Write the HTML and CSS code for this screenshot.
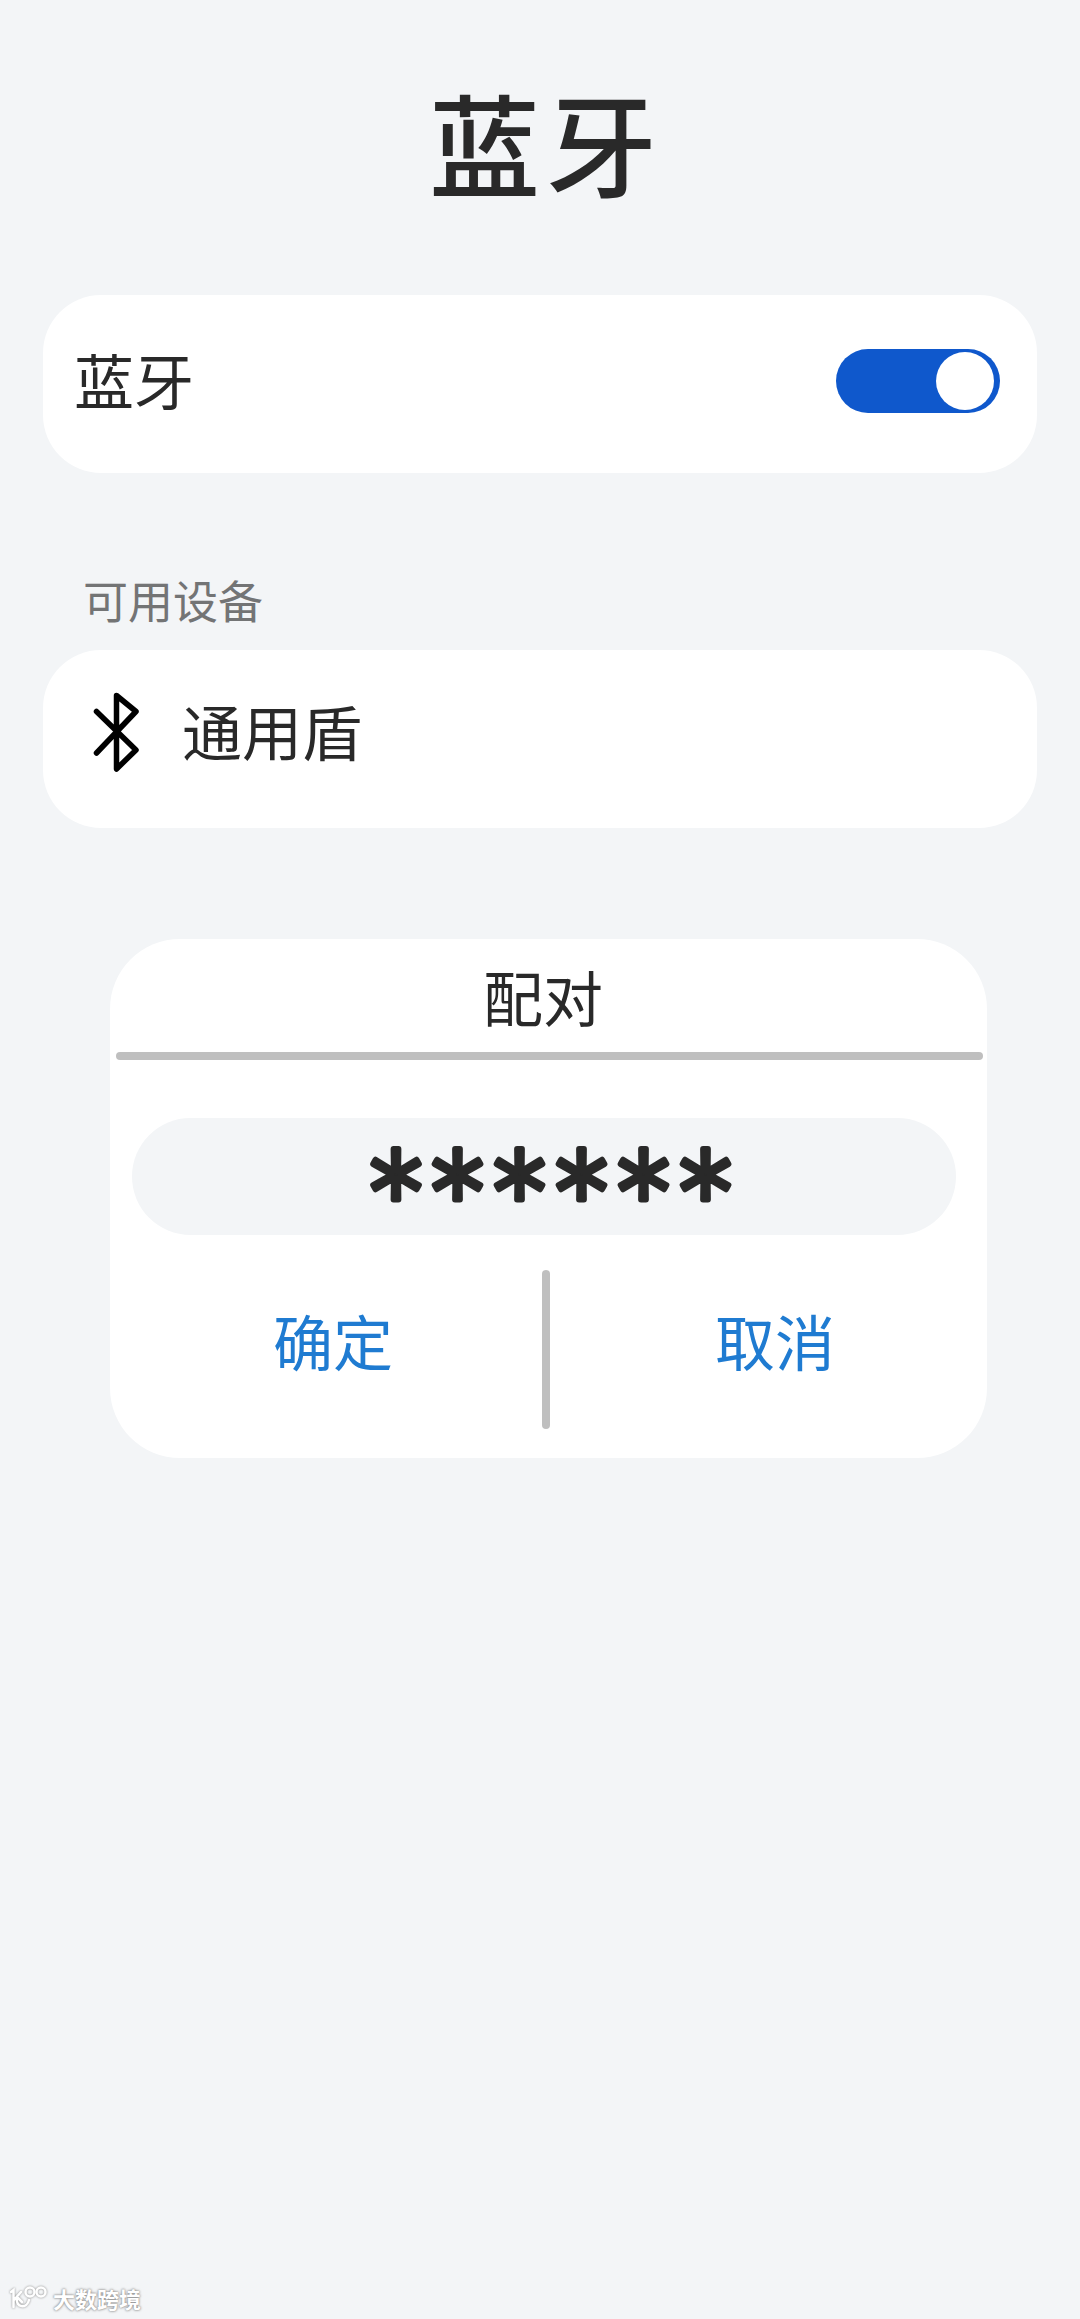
FILE: index.html
```
<!DOCTYPE html>
<html lang="zh-CN">
<head>
  <meta charset="UTF-8" />
  <meta name="viewport" content="width=device-width, initial-scale=1.0"/>
  <title>蓝牙</title>
  <link rel="stylesheet" href="styles.css">
</head>
<body>
  <h1 class="page-title">蓝牙</h1>

  <main>
    <div class="card">
      <span class="label">蓝牙</span>
      <div class="switch"><div class="knob"></div></div>
    </div>

    <h2 class="section-title">可用设备</h2>
    <div class="card device">
      <svg class="bt-icon" width="46" height="80" viewBox="0 0 46 80">
        <path d="M3.500 19.500 L43 58 L23.500 77 V3.500 L43 19.500 L3.500 61" />
      </svg>
      <span class="label">通用盾</span>
    </div>

    <!-- Pairing dialog -->
    <div class="dialog">
      <h3 class="dialog-title">配对</h3>
      <div class="line"></div>
      <div class="pin">
        <svg width="824" height="117" viewBox="0 0 824 117">
          <text x="264 325.500 387.500 449.500 511.500 573.500" y="120">******</text>
        </svg>
      </div>
      <div class="actions">
        <div class="btn ok">确定</div>
        <div class="divider"></div>
        <div class="btn cancel">取消</div>
      </div>
    </div>
  </main>

  <footer class="brand">
    <svg class="brand-logo" width="40" height="28" viewBox="0 0 40 28">
      <path d="M2 8 L4.500 6 V23 M5 16 L12 8 M8 14 C6 24 18 25 20 16 M9 14 L13 18" />
      <circle cx="21" cy="8" r="4.500" />
      <circle cx="32" cy="8" r="4.500" />
    </svg>
    <span>大数跨境</span>
  </footer>
</body>
</html>
```
FILE: styles.css
```
* {
  box-sizing: border-box;
}

body {
  font-family: "Noto Sans CJK SC", sans-serif;
  background-color: #f3f5f7;
  color: #292929;
  margin: 0;
  min-height: 2319px;
  display: flex;
  flex-direction: column;
}

h1, h2, h3 {
  margin: 0;
  font-weight: 400;
}

.page-title {
  height: 295px;
  padding-top: 81px;
  padding-left: 12px;
  font-size: 111px;
  font-weight: 500;
  line-height: 120px;
  letter-spacing: 6px;
  text-align: center;
}

main {
  padding: 0 43px;
}

.card {
  height: 178px;
  padding: 0 37px 0 31px;
  background-color: #fff;
  border-radius: 58px;
  display: flex;
  justify-content: space-between;
  align-items: center;
}

.label {
  font-size: 60px;
  line-height: 60px;
  margin-bottom: 11px;
}

.switch {
  width: 164px;
  height: 64px;
  padding: 3px 6px;
  margin-bottom: 6px;
  border-radius: 32px;
  background-color: #0f58cc;
  display: flex;
  justify-content: flex-end;
}

.knob {
  width: 58px;
  height: 58px;
  border-radius: 50%;
  background-color: #fff;
}

.section-title {
  height: 177px;
  padding: 104px 0 0 40px;
  font-size: 45px;
  line-height: 45px;
  color: #737475;
}

.device {
  justify-content: flex-start;
  padding-left: 50px;
}

.device .label {
  margin-bottom: 18px;
}

.bt-icon {
  margin-right: 43px;
  margin-bottom: 15px;
  fill: none;
  stroke: #000;
  stroke-width: 5.5;
  stroke-linecap: round;
  stroke-linejoin: round;
}

.dialog {
  width: 877px;
  height: 519px;
  margin: 111px 0 0 67px;
  background-color: #fff;
  border-radius: 70px;
}

.dialog-title {
  height: 113px;
  padding-top: 27px;
  padding-right: 11px;
  font-size: 60px;
  line-height: 60px;
  text-align: center;
}

.line {
  height: 8px;
  margin: 0 4px 0 6px;
  border-radius: 4px;
  background-color: #bfbfbf;
}

.pin {
  width: 824px;
  height: 117px;
  margin: 58px 0 0 22px;
  border-radius: 59px;
  background-color: #f3f5f7;
}

.pin svg {
  display: block;
  overflow: visible;
}

.pin text {
  font-family: Inter, sans-serif;
  font-size: 122px;
  font-weight: 200;
  text-anchor: middle;
  fill: #292929;
  stroke: #292929;
  stroke-width: 6;
  stroke-linejoin: round;
}

.actions {
  display: flex;
  margin-top: 35px;
}

.btn {
  flex: 1;
  padding-top: 40px;
  font-size: 60px;
  line-height: 60px;
  text-align: center;
  color: #1f7bd1;
}

.ok {
  flex: 0 0 432px;
  padding-left: 14px;
}

.cancel {
  padding-left: 13px;
}

.divider {
  width: 8px;
  height: 159px;
  border-radius: 4px;
  background-color: #bfbfbf;
}

.brand {
  margin-top: auto;
  padding: 0 0 7px 9px;
  display: flex;
  align-items: center;
  gap: 4px;
  color: #fff;
  font-size: 22px;
  font-weight: 700;
  line-height: 26px;
  text-shadow: 0 0 2px #888, 0 0 3px #999;
}

.brand-logo {
  fill: none;
  stroke: #fff;
  stroke-width: 2.5;
  stroke-linecap: round;
  filter: drop-shadow(0 0 1px #888);
}
```
